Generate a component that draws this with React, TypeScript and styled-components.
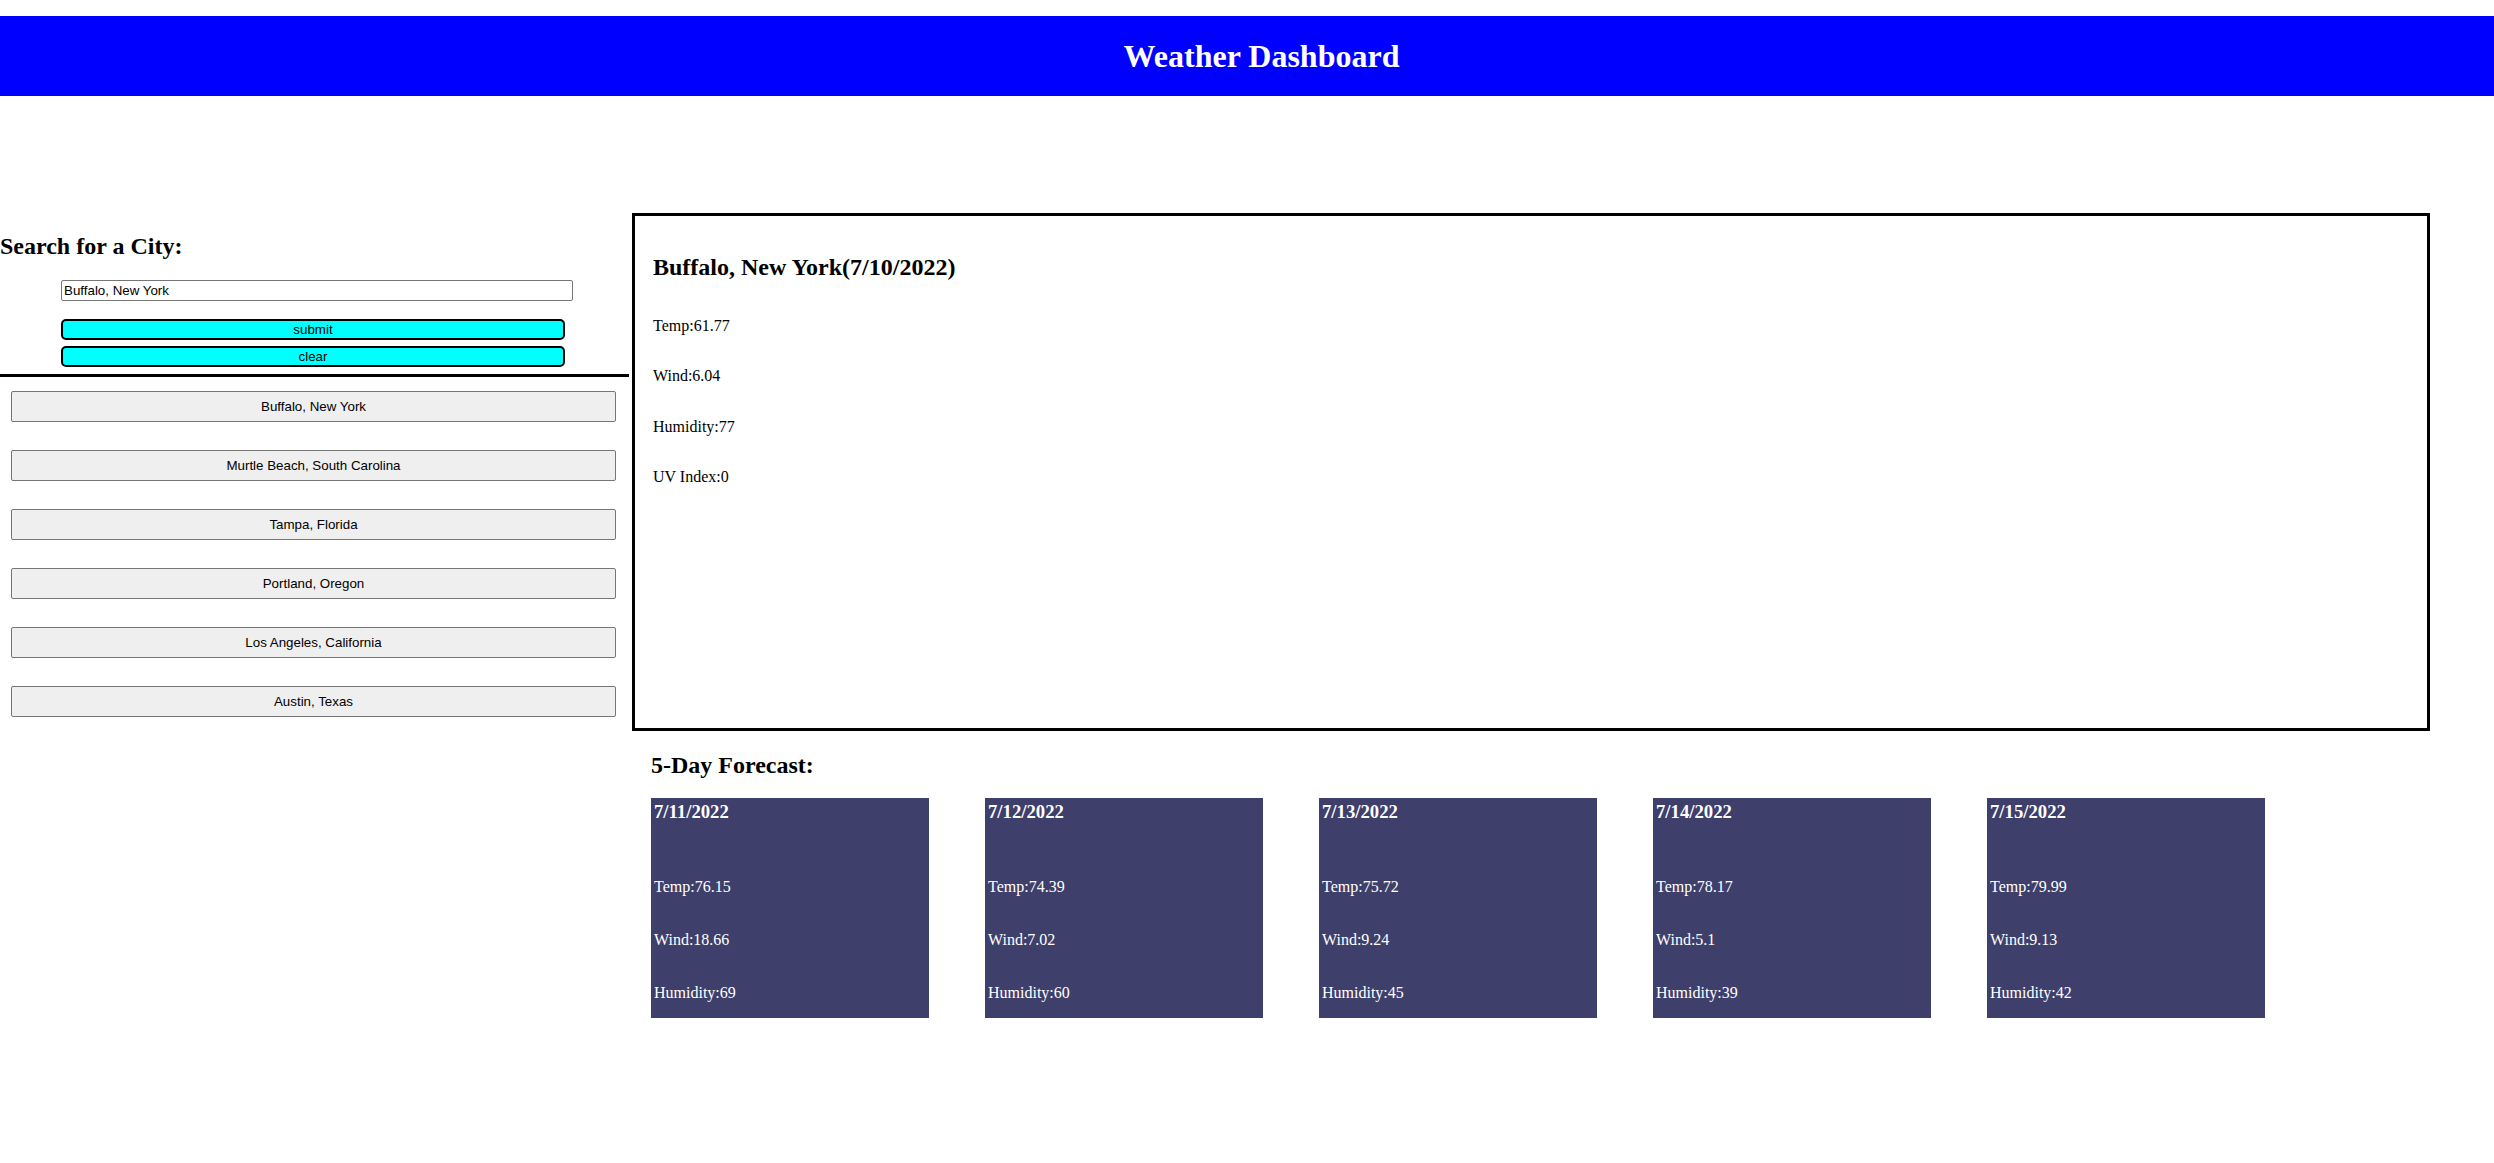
import React from "react";
import styled, { createGlobalStyle } from "styled-components";

const GlobalStyle = createGlobalStyle`
  html, body {
    margin: 0;
    padding: 0;
    background: #ffffff;
  }
  body {
    font-family: "Liberation Serif", "Times New Roman", serif;
    font-size: 16px;
    color: #000000;
  }
`;

const Header = styled.header`
  margin-top: 16px;
  height: 80px;
  background: #0000ff;
  display: flex;
  align-items: center;
  justify-content: center;
  padding-left: 29px;
`;

const Title = styled.h1`
  margin: 0;
  font-size: 32px;
  font-weight: bold;
  color: #ffffff;
`;

const Layout = styled.div`
  display: flex;
  align-items: flex-start;
  gap: 3px;
  margin-top: 117px;
`;

const Sidebar = styled.aside`
  width: 629px;
  flex: none;
  padding-top: 20px;
`;

const SearchForm = styled.form`
  display: flex;
  flex-direction: column;
  align-items: flex-start;
  border-bottom: 3px solid #000000;
  padding-bottom: 7px;
`;

const SectionTitle = styled.h2`
  margin: 0;
  font-size: 24px;
  font-weight: bold;
`;

const CityInput = styled.input`
  box-sizing: border-box;
  margin: 20px 0 0 61px;
  width: 512px;
  height: 21px;
  padding: 1px 2px;
  border: 1px solid #767676;
  border-radius: 2px;
  font-family: "Liberation Sans", Arial, sans-serif;
  font-size: 13.33px;
  color: #000000;
  background: #ffffff;
`;

const ActionButton = styled.button<{ $top: number }>`
  box-sizing: border-box;
  margin: ${(p) => p.$top}px 0 0 61px;
  width: 504px;
  height: 21px;
  padding: 0;
  background: #00ffff;
  border: 2px solid #000000;
  border-radius: 5px;
  font-family: "Liberation Sans", Arial, sans-serif;
  font-size: 13.33px;
  color: #000000;
  line-height: 1;
`;

const CityList = styled.div`
  display: flex;
  flex-direction: column;
  gap: 28px;
  padding: 14px 0 0 11px;
`;

const CityButton = styled.button`
  box-sizing: border-box;
  width: 605px;
  height: 31px;
  padding: 0;
  background: #efefef;
  border: 1px solid #767676;
  border-radius: 2px;
  font-family: "Liberation Sans", Arial, sans-serif;
  font-size: 13.33px;
  color: #000000;
`;

const MainColumn = styled.main`
  width: 1798px;
  flex: none;
`;

const CurrentCard = styled.section`
  box-sizing: border-box;
  height: 518px;
  border: 3px solid #000000;
  padding: 38px 18px;
`;

const CardTitle = styled.h2`
  margin: 0 0 36px;
  font-size: 24px;
  font-weight: bold;
`;

const StatList = styled.div<{ $gap: number }>`
  display: flex;
  flex-direction: column;
  gap: ${(p) => p.$gap}px;
`;

const Stat = styled.p`
  margin: 0;
  font-size: 16px;
`;

const ForecastSection = styled.section`
  margin-top: 21px;
  padding-left: 19px;
`;

const ForecastRow = styled.div`
  display: flex;
  gap: 56px;
  margin-top: 19px;
`;

const ForecastCard = styled.div`
  box-sizing: border-box;
  width: 278px;
  height: 220px;
  padding: 3px 3px 2px;
  background: #3e3f6b;
  color: #ffffff;
`;

const ForecastDate = styled.h3`
  margin: 0 0 55px;
  font-size: 18.72px;
  font-weight: bold;
`;

const cities = [
  "Buffalo, New York",
  "Murtle Beach, South Carolina",
  "Tampa, Florida",
  "Portland, Oregon",
  "Los Angeles, California",
  "Austin, Texas",
];

const forecast = [
  { date: "7/11/2022", temp: "76.15", wind: "18.66", humidity: "69" },
  { date: "7/12/2022", temp: "74.39", wind: "7.02", humidity: "60" },
  { date: "7/13/2022", temp: "75.72", wind: "9.24", humidity: "45" },
  { date: "7/14/2022", temp: "78.17", wind: "5.1", humidity: "39" },
  { date: "7/15/2022", temp: "79.99", wind: "9.13", humidity: "42" },
];

export default function App() {
  return (
    <>
      <GlobalStyle />
      <Header>
        <Title>Weather Dashboard</Title>
      </Header>
      <Layout>
        <Sidebar>
          <SearchForm onSubmit={(e) => e.preventDefault()}>
            <SectionTitle>Search for a City:</SectionTitle>
            <CityInput type="text" defaultValue="Buffalo, New York" />
            <ActionButton type="submit" $top={18}>submit</ActionButton>
            <ActionButton type="button" $top={6}>clear</ActionButton>
          </SearchForm>
          <CityList>
            {cities.map((c) => (
              <CityButton key={c} type="button">
                {c}
              </CityButton>
            ))}
          </CityList>
        </Sidebar>
        <MainColumn>
          <CurrentCard>
            <CardTitle>Buffalo, New York(7/10/2022)</CardTitle>
            <StatList $gap={32.4}>
              <Stat>Temp:61.77</Stat>
              <Stat>Wind:6.04</Stat>
              <Stat>Humidity:77</Stat>
              <Stat>UV Index:0</Stat>
            </StatList>
          </CurrentCard>
          <ForecastSection>
            <SectionTitle>5-Day Forecast:</SectionTitle>
            <ForecastRow>
              {forecast.map((d) => (
                <ForecastCard key={d.date}>
                  <ForecastDate>{d.date}</ForecastDate>
                  <StatList $gap={35.2}>
                    <Stat>Temp:{d.temp}</Stat>
                    <Stat>Wind:{d.wind}</Stat>
                    <Stat>Humidity:{d.humidity}</Stat>
                  </StatList>
                </ForecastCard>
              ))}
            </ForecastRow>
          </ForecastSection>
        </MainColumn>
      </Layout>
    </>
  );
}
